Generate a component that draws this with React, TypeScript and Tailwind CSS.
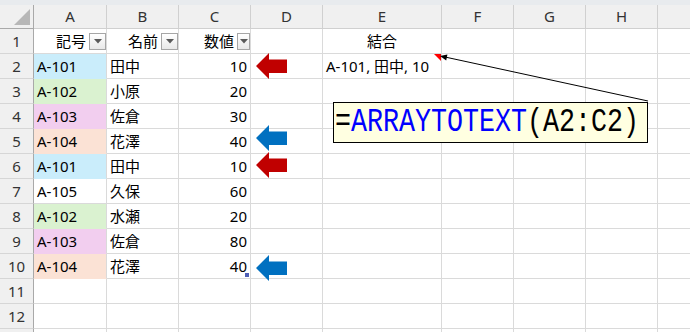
import React from 'react';

const COL_W = ['w-[73px]', 'w-[72px]', 'w-[72px]', 'w-[72px]', 'w-[119px]', 'w-[72px]', 'w-[72px]', 'w-[72px]'];
const LETTERS = ['A', 'B', 'C', 'D', 'E', 'F', 'G', 'H'];

// Office theme light tints used as fills in column A
const FILL: Record<string, string> = {
  blue: 'bg-[#caedfb] border-b-[#caedfb]',
  green: 'bg-[#daf2d0] border-b-[#daf2d0]',
  pink: 'bg-[#f2ceef] border-b-[#f2ceef]',
  peach: 'bg-[#fbe2d5] border-b-[#fbe2d5]',
  none: '',
};

const rows = [
  { code: 'A-101', name: '田中', value: 10, fill: 'blue' },
  { code: 'A-102', name: '小原', value: 20, fill: 'green' },
  { code: 'A-103', name: '佐倉', value: 30, fill: 'pink' },
  { code: 'A-104', name: '花澤', value: 40, fill: 'peach' },
  { code: 'A-101', name: '田中', value: 10, fill: 'blue' },
  { code: 'A-105', name: '久保', value: 60, fill: 'none' },
  { code: 'A-102', name: '水瀬', value: 20, fill: 'green' },
  { code: 'A-103', name: '佐倉', value: 80, fill: 'pink' },
  { code: 'A-104', name: '花澤', value: 40, fill: 'peach' },
];

function FilterButton({ w = 'w-[17px]' }: { w?: string }) {
  return (
    <div
      className={`${w} h-[17px] shrink-0 ml-[3px] border border-[#a6a6a6] bg-gradient-to-b from-white to-[#e9e9e9] flex items-center justify-center`}
    >
      <svg width="8" height="5" viewBox="0 0 8 5">
        <path d="M0 0h8L4 4.5z" fill="#5a5a5a" />
      </svg>
    </div>
  );
}

function Cell({
  i,
  className = '',
  children,
}: {
  i: number;
  className?: string;
  children?: React.ReactNode;
}) {
  return (
    <div
      className={`${COL_W[i]} shrink-0 h-full border-r border-b border-[#dadada] flex items-center px-[3px] relative ${className}`}
    >
      {children}
    </div>
  );
}

function RowHead({ n }: { n?: number }) {
  return (
    <div className="w-[34px] shrink-0 h-full bg-[#f0f0f0] border-r border-r-[#a9a9a9] border-b border-b-[#d6d6d6] flex items-center justify-center text-[15px] text-[#333]">
      {n}
    </div>
  );
}

function Arrow({ color, className }: { color: string; className: string }) {
  return (
    <svg className={`absolute ${className}`} width="31" height="26" viewBox="0 0 31 26">
      <path d="M0 13L13 0v6.5h18v13.5H13V26z" fill={color} />
    </svg>
  );
}

export default function App() {
  return (
    <div className="relative w-[690px] h-[332px] overflow-hidden bg-white font-['Noto_Sans','Noto_Sans_CJK_JP',sans-serif] text-black">
      <div className="h-[5px] bg-[#e8ebee]" />

      {/* column headers */}
      <div className="flex h-[24px] bg-[#f0f0f0] text-[15px] text-[#333]">
        <div className="w-[34px] shrink-0 h-full border-r border-b border-[#a9a9a9] relative">
          <svg className="absolute left-0 top-0" width="33" height="23" viewBox="0 0 33 23">
            <path d="M14 20L30 4v16z" fill="#b7b7b7" />
          </svg>
        </div>
        {LETTERS.map((l, i) => (
          <div
            key={l}
            className={`${COL_W[i]} shrink-0 h-full border-r border-b border-[#d0d0d0] flex items-center justify-center`}
          >
            {l}
          </div>
        ))}
        <div className="flex-1 h-full border-b border-[#d0d0d0]" />
      </div>

      <div className="text-[15px]">
        {/* row 1: table headers */}
        <div className="flex h-[25px]">
          <RowHead n={1} />
          <Cell i={0} className="justify-end !pr-0">
            記号
            <FilterButton />
          </Cell>
          <Cell i={1} className="justify-end !pr-0">
            名前
            <FilterButton />
          </Cell>
          <Cell i={2} className="justify-end !pr-0">
            数値
            <FilterButton w="w-[13px]" />
          </Cell>
          <Cell i={3} />
          <Cell i={4} className="justify-center">
            結合
          </Cell>
          <Cell i={5} />
          <Cell i={6} />
          <Cell i={7} />
          <div className="flex-1 h-full border-b border-[#dadada]" />
        </div>

        {rows.map((r, idx) => (
          <div key={idx} className="flex h-[25px]">
            <RowHead n={idx + 2} />
            <Cell i={0} className={FILL[r.fill]}>
              {r.code}
            </Cell>
            <Cell i={1}>{r.name}</Cell>
            <Cell i={2} className="justify-end">
              {r.value}
              {idx === rows.length - 1 && (
                <div className="absolute right-[1px] bottom-[1px] w-[4px] h-[4px] bg-[#4f5fb5]" />
              )}
            </Cell>
            <Cell i={3} />
            <Cell i={4}>{idx === 0 ? 'A-101, 田中, 10' : ''}</Cell>
            <Cell i={5} />
            <Cell i={6} />
            <Cell i={7} />
            <div className="flex-1 h-full border-b border-[#dadada]" />
          </div>
        ))}

        {[11, 12, undefined].map((n, k) => (
          <div key={k} className="flex h-[25px]">
            <RowHead n={n} />
            {COL_W.map((_, i) => (
              <Cell key={i} i={i} />
            ))}
            <div className="flex-1 h-full border-b border-[#dadada]" />
          </div>
        ))}
      </div>

      {/* arrows pointing at the rows */}
      <Arrow color="#c00000" className="left-[256px] top-[53px]" />
      <Arrow color="#0070c0" className="left-[256px] top-[125px]" />
      <Arrow color="#c00000" className="left-[256px] top-[152px]" />
      <Arrow color="#0070c0" className="left-[256px] top-[255px]" />

      {/* comment indicator, connector and callout */}
      <svg className="absolute left-0 top-0 pointer-events-none" width="690" height="332">
        <path d="M434 54h7v7z" fill="#ff0000" />
        <line x1="648" y1="101" x2="445" y2="57" stroke="#000" strokeWidth="1" />
        <path d="M440 56L447.4 54.6L446.2 60.4z" fill="#000" />
      </svg>

      <div className="absolute left-[333px] top-[102px] w-[315px] h-[41px] bg-[#ffffe1] border border-black flex items-center pl-[1px] overflow-hidden">
        <span className="inline-block scale-y-125 font-['Liberation_Mono',monospace] text-[26.67px] leading-none whitespace-pre">
          <span className="text-black">=</span>
          <span className="text-[#0000ff]">ARRAYTOTEXT</span>
          <span className="text-black">(A2:C2)</span>
        </span>
      </div>
    </div>
  );
}
